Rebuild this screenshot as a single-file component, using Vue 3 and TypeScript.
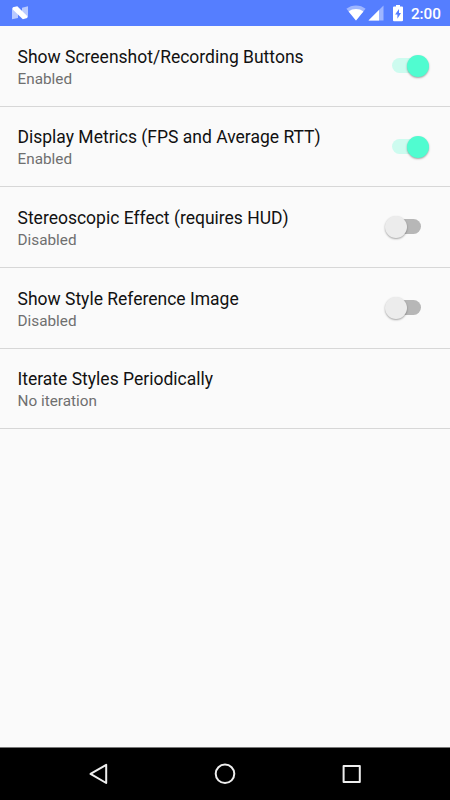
<script setup lang="ts">
import { ref } from 'vue'

interface Setting {
  title: string
  summary: string
  on?: boolean
}

const settings = ref<Setting[]>([
  { title: 'Show Screenshot/Recording Buttons', summary: 'Enabled', on: true },
  { title: 'Display Metrics (FPS and Average RTT)', summary: 'Enabled', on: true },
  { title: 'Stereoscopic Effect (requires HUD)', summary: 'Disabled', on: false },
  { title: 'Show Style Reference Image', summary: 'Disabled', on: false },
  { title: 'Iterate Styles Periodically', summary: 'No iteration' },
])

function toggle(item: Setting) {
  if (item.on === undefined) return
  item.on = !item.on
  item.summary = item.on ? 'Enabled' : 'Disabled'
}
</script>

<template>
  <div class="screen">
    <header class="status">
      <svg class="nougat" width="16" height="14" viewBox="0 0 16 14">
        <path d="M0 1.800 6 4v8L0 13.300zM16 .2v11.400L10 9.500V1.700z" fill="#b9caff" />
        <path d="M.8 1.200 5.300.2 15.200 9.900v2.200L10.800 13.200.8 3.600z" fill="#fff" />
      </svg>
      <div class="indicators">
        <svg class="wifi" width="20" height="16" viewBox="0 0 20 16">
          <path d="M10 15.600.4 3.700C3.100 1.600 6.300.4 10 .4s6.900 1.200 9.600 3.300z" fill="#9fb6ff" />
          <path d="M10 15.600 2.600 6.400C4.700 4.700 7.200 3.900 10 3.900s5.300.8 7.400 2.500z" fill="#fff" />
        </svg>
        <svg class="signal" width="16" height="16" viewBox="0 0 16 16">
          <path d="M15.500.500v15H.500z" fill="#9fb6ff" />
          <path d="M11 5v10.500H.500z" fill="#fff" />
        </svg>
        <svg class="battery" width="10" height="17" viewBox="0 0 10 17">
          <path d="M3 0h4v1.500h2q1 0 1 1v12.700q0 1-1 1H1q-1 0-1-1V2.500q0-1 1-1h2z" fill="#fff" />
          <path d="M6 4 2.100 9.500h2.300v4.200L8 8.100H6z" fill="#557eff" />
        </svg>
        <span class="clock">2:00</span>
      </div>
    </header>

    <main class="list">
      <section v-for="item in settings" :key="item.title" class="row" @click="toggle(item)">
        <div class="labels">
          <div class="title">{{ item.title }}</div>
          <div class="summary">{{ item.summary }}</div>
        </div>
        <div v-if="item.on !== undefined" class="switch" :class="{ on: item.on }">
          <div class="track"></div>
          <div class="thumb"></div>
        </div>
      </section>
    </main>

    <nav class="nav">
      <svg width="24" height="24" viewBox="0 0 24 24"><path d="M20.200 2.800v18.200L4.500 11.900z" /></svg>
      <svg width="24" height="24" viewBox="0 0 24 24"><circle cx="12" cy="11.800" r="9.300" /></svg>
      <svg width="24" height="24" viewBox="0 0 24 24"><path d="M3.600 4h16.200v16H3.600z" /></svg>
    </nav>
  </div>
</template>

<style>
body {
  margin: 0;
}
</style>

<style scoped>
.screen {
  display: flex;
  flex-direction: column;
  width: 450px;
  height: 800px;
  overflow: hidden;
  background: #fafafa;
  font-family: Roboto, "Noto Sans", sans-serif;
}
.status {
  display: flex;
  flex: none;
  justify-content: space-between;
  box-sizing: border-box;
  height: 26px;
  padding: 0 9px 0 12px;
  background: #557eff;
}
.nougat {
  margin-top: 6px;
}
.indicators {
  display: flex;
}
.wifi {
  margin-top: 5px;
}
.signal {
  margin: 5px 9px 0 1.500px;
}
.battery {
  margin: 5px 8px 0 0;
}
.clock {
  margin-top: 4px;
  font-size: 15.300px;
  font-weight: 500;
  line-height: 20px;
  color: #fff;
}
.list {
  flex: 1;
}
.row {
  display: flex;
  align-items: center;
  justify-content: space-between;
  box-sizing: border-box;
  height: 80.700px;
  padding: 0 17.500px;
  border-bottom: 1px solid #d7d7d7;
}
.labels {
  padding-top: 3.400px;
}
.title {
  font-size: 17.500px;
  line-height: 22px;
  color: #111;
  white-space: nowrap;
}
.summary {
  font-size: 15.300px;
  line-height: 22px;
  color: #6f6f6f;
}
.switch {
  position: relative;
  flex: none;
  width: 50px;
  height: 24px;
}
.track {
  width: 32px;
  height: 15px;
  margin: 4px 0 0 6px;
  border-radius: 8px;
  background: #b7b7b7;
}
.thumb {
  position: absolute;
  top: 1px;
  left: 2px;
  width: 22px;
  height: 22px;
  border-radius: 50%;
  background: #ececec;
  box-shadow: 0 1px 2px rgba(0, 0, 0, 0.350);
}
.on .track {
  margin-left: 9px;
  background: #cdfbef;
}
.on .thumb {
  left: 24px;
  background: #50fcd0;
}
.nav {
  display: flex;
  flex: none;
  justify-content: space-between;
  align-items: center;
  box-sizing: border-box;
  height: 53px;
  padding: 0 86px;
  border-top: 1px solid #777;
  background: #000;
}
.nav svg {
  fill: none;
  stroke: #eee;
  stroke-width: 2;
  stroke-linejoin: round;
}
</style>
